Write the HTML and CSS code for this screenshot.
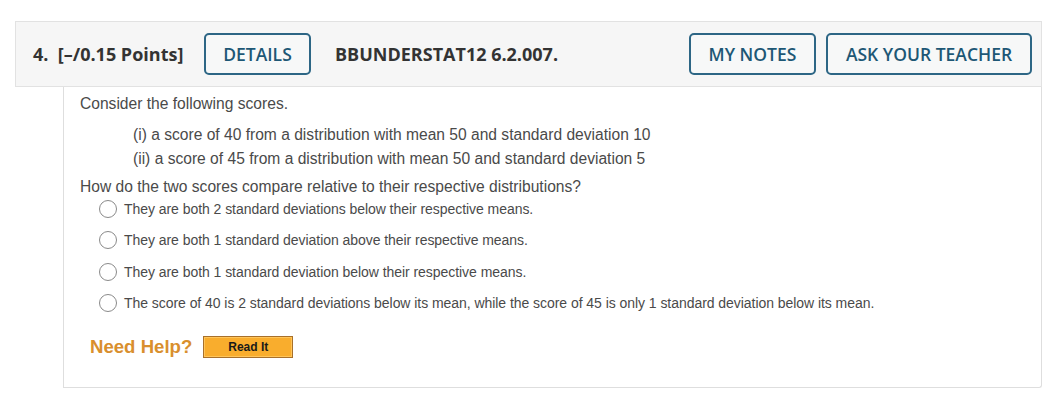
FILE: index.html
```html
<!DOCTYPE html>
<html>
<head>
<meta charset="utf-8">
<link rel="stylesheet" href="styles.css">
</head>
<body>
<div class="question">
  <div class="qhead">
    <div class="points">4.&nbsp;&nbsp;[–/0.15 Points]</div>
    <button class="btn details">DETAILS</button>
    <div class="code">BBUNDERSTAT12 6.2.007.</div>
    <div class="spacer"></div>
    <button class="btn notes">MY NOTES</button>
    <button class="btn ask">ASK YOUR TEACHER</button>
  </div>
  <div class="qbody">
    <p class="intro">Consider the following scores.</p>
    <div class="items">
      <p>(i) a score of 40 from a distribution with mean 50 and standard deviation 10</p>
      <p>(ii) a score of 45 from a distribution with mean 50 and standard deviation 5</p>
    </div>
    <p class="ask-q">How do the two scores compare relative to their respective distributions?</p>
    <ul class="options">
      <li><span class="radio"></span><span>They are both 2 standard deviations below their respective means.</span></li>
      <li><span class="radio"></span><span>They are both 1 standard deviation above their respective means.</span></li>
      <li><span class="radio"></span><span>They are both 1 standard deviation below their respective means.</span></li>
      <li><span class="radio"></span><span>The score of 40 is 2 standard deviations below its mean, while the score of 45 is only 1 standard deviation below its mean.</span></li>
    </ul>
    <div class="help">
      <span class="need">Need Help?</span>
      <span class="readit">Read It</span>
    </div>
  </div>
</div>
</body>
</html>
```
FILE: styles.css
```css
html, body {
  margin: 0;
  padding: 0;
  background: #ffffff;
}
body {
  padding-top: 21px;
}
.question {
  width: 1027px;
  margin-left: 15px;
}
.qhead {
  box-sizing: border-box;
  height: 66px;
  background: #f6f6f6;
  border: 1px solid #e2e2e2;
  display: flex;
  align-items: center;
  padding: 0 9px 0 17px;
  font-family: "Open Sans", sans-serif;
  font-size: 18px;
  color: #333333;
}
.points {
  font-weight: 700;
  width: 171px;
  white-space: nowrap;
}
.code {
  font-weight: 700;
  margin-left: 24px;
  white-space: nowrap;
}
.spacer { flex: 1; }
.btn {
  box-sizing: border-box;
  height: 42px;
  border: 2px solid #2d6685;
  border-radius: 5px;
  background: #f7f8f8;
  color: #1d5775;
  font-family: "Open Sans", sans-serif;
  font-size: 17.5px;
  font-weight: 600;
  padding: 0;
  margin: 0;
}
.details { width: 107px; }
.notes { width: 127px; }
.ask { width: 206px; margin-left: 10px; }

.qbody {
  box-sizing: border-box;
  margin-left: 48px;
  height: 301px;
  border: 1px solid #dedede;
  border-top: none;
  border-radius: 0 0 3px 0;
  padding: 7px 16px 0 16px;
  font-family: "Liberation Sans", Arial, sans-serif;
  font-size: 15.6px;
  color: #4a4a4a;
}
.qbody p {
  margin: 0;
}
.intro {
  line-height: 20px;
}
.items {
  margin: 9px 0 0 53px;
}
.items p {
  line-height: 24px;
}
.ask-q {
  line-height: 20px;
  margin-top: 6px !important;
}
.options {
  list-style: none;
  margin: -4px 0 0 19px;
  padding: 0;
  font-size: 14px;
  letter-spacing: -0.05px;
}
.options li {
  display: flex;
  align-items: center;
  height: 31.5px;
}
.radio {
  box-sizing: border-box;
  width: 18px;
  height: 18px;
  border: 1px solid #8a8a8a;
  border-radius: 50%;
  margin-right: 7px;
  flex: none;
}
.help {
  display: flex;
  align-items: center;
  margin: 17px 0 0 10px;
}
.need {
  font-family: "Liberation Sans", Arial, sans-serif;
  font-weight: 700;
  font-size: 18.6px;
  color: #d98f2e;
}
.readit {
  box-sizing: border-box;
  margin-left: 11px;
  width: 90px;
  height: 22px;
  border: 1px solid #a8702a;
  background: #f9ad2d;
  box-shadow: inset 0 0 0 1px #ffc55a;
  font-family: "Liberation Sans", Arial, sans-serif;
  font-weight: 700;
  font-size: 12px;
  color: #1a1a1a;
  display: flex;
  align-items: center;
  justify-content: center;
}
```
